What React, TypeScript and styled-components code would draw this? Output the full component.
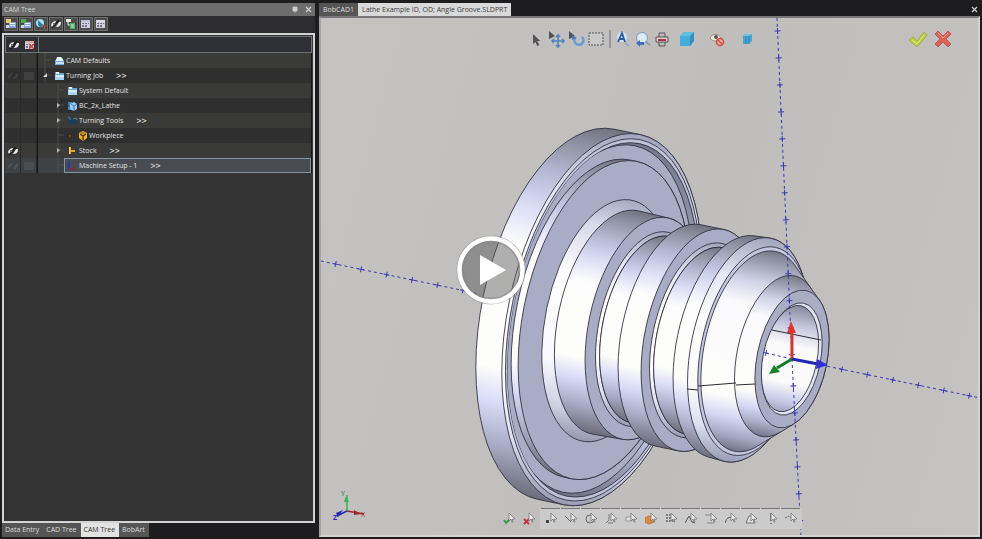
import React from "react";
import styled, { createGlobalStyle } from "styled-components";

const GlobalStyle = createGlobalStyle`
  * { box-sizing: border-box; }
  html, body, #root { height: 100%; margin: 0; }
  body { background: #1d1d20; font-family: "Open Sans", "Noto Sans", sans-serif; font-size: 7px; line-height: 10px; color: #e4e4e4; }
  button { font: inherit; color: inherit; border: 0; padding: 0; background: none; cursor: pointer; }
  ul { list-style: none; margin: 0; padding: 0; }
  svg { display: block; }
`;

/* ---------- layout ---------- */

const Shell = styled.div`
  position: relative;
  display: grid;
  grid-template-columns: minmax(200px, 9fr) minmax(0, 19fr);
  gap: 4px;
  height: 100vh;
  padding: 3px 2px 2px;
  overflow: hidden;
`;

const SidePanel = styled.aside`
  display: flex;
  flex-direction: column;
  min-height: 0;
`;

const TitleBar = styled.header`
  display: flex;
  align-items: center;
  gap: 7px;
  height: 13px;
  padding: 0 3px 0 2px;
  background: #6d6d6d;
  flex: none;
`;

const PanelTitle = styled.span`
  flex: 1;
  color: #d6d6d6;
`;

const PanelTools = styled.div`
  display: flex;
  gap: 1px;
  height: 17px;
  padding: 1px 2px;
  background: #2d2d2f;
  flex: none;
`;

const PanelTool = styled.button`
  display: grid;
  place-items: center;
  width: 14px;
  height: 14px;
  background: #4c4c4c;
  border: 1px solid #6e6e6c;
`;

const TreeFrame = styled.section`
  flex: 1;
  min-height: 0;
  padding: 1px;
  background: #333334;
  border: 2px solid #d2d3d3;
  overflow: hidden;
`;

const TreeHeader = styled.div`
  display: grid;
  grid-template-columns: 16px 16px 1fr;
  align-items: center;
  justify-items: center;
  height: 17px;
  background: #2e3035;
  border: 1px solid #6f7173;
`;

const HeaderField = styled.span`
  align-self: stretch;
  justify-self: stretch;
  border-left: 1px solid #77797b;
`;

const Row = styled.li<{ $selected?: boolean }>`
  display: grid;
  grid-template-columns: 16px 16px 1fr;
  height: 15px;
  background: #3a3a39;
  &:nth-child(even) { background: ${(p) => (p.$selected ? "#3f4244" : "#2f2f30")}; }
`;

const Cell = styled.span`
  display: grid;
  place-items: center;
  border-right: 1px solid #29292a;
`;

const NodeCell = styled.div<{ $level: number }>`
  display: flex;
  min-width: 0;
  padding-left: ${(p) => 5 + p.$level * 13}px;
  border-left: 1px solid #151515;
  border-right: 1px solid #151515;
`;

const NodeBox = styled.span<{ $selected?: boolean }>`
  display: flex;
  flex: 1;
  align-items: center;
  gap: 1px;
  min-width: 0;
  padding-left: 2px;
  border: 1px solid ${(p) => (p.$selected ? "#8296a8" : "transparent")};
  background: ${(p) => (p.$selected ? "#484c51" : "transparent")};
  white-space: nowrap;
`;

const Chevrons = styled.span`
  margin-left: 12px;
  font-size: 9px;
  font-weight: 600;
`;

const BottomTabs = styled.nav`
  display: flex;
  height: 14px;
  flex: none;
`;

const PanelTab = styled.button<{ $active?: boolean }>`
  padding: 0 4px 0 3px;
  background: ${(p) => (p.$active ? "#e2e2e2" : "#555556")};
  color: ${(p) => (p.$active ? "#333" : "#dcdcdc")};
`;

const Workspace = styled.main`
  display: flex;
  flex-direction: column;
  min-width: 0;
  min-height: 0;
`;

const DocTabs = styled.nav`
  display: flex;
  height: 13px;
  flex: none;
`;

const DocTab = styled.button<{ $active?: boolean }>`
  padding: 0 4px;
  background: ${(p) => (p.$active ? "#d9d9d9" : "#555556")};
  color: ${(p) => (p.$active ? "#3c3c3c" : "#dedede")};
  white-space: nowrap;
`;

const CloseButton = styled.button`
  margin-left: auto;
  width: 10px;
  display: grid;
  place-items: center;
`;

const Viewport = styled.section`
  position: relative;
  flex: 1;
  min-height: 0;
  display: flex;
  flex-direction: column;
  justify-content: space-between;
  background: linear-gradient(105deg, #c4c3c2, #bfbebd 55%, #c4c3c2);
  border: 2px solid #d4d4d4;
  border-top-color: #77777a;
  border-left-color: #a4a4a4;
  overflow: hidden;
`;

const Scene = styled.svg`
  position: absolute;
  inset: 0;
  width: 100%;
  height: 100%;
`;

const ViewHeader = styled.div`
  position: relative;
  display: grid;
  grid-template-columns: 1fr auto 1fr;
  align-items: center;
  padding: 11px 26px 0 16px;
`;

const ViewTools = styled.div`
  grid-column: 2;
  display: flex;
  align-items: center;
`;

const ViewTool = styled.button<{ $wide?: boolean }>`
  display: grid;
  place-items: center;
  width: ${(p) => (p.$wide ? 30 : 20)}px;
  height: 20px;
`;

const Divider = styled.span`
  width: 2px;
  height: 18px;
  margin: 0 2px;
  background: #97979a;
`;

const Decision = styled.div`
  justify-self: end;
  display: flex;
  gap: 6px;
`;

const SnapBar = styled.div`
  position: relative;
  display: flex;
  justify-content: center;
  margin-bottom: 6px;
`;

const SnapGroup = styled.div<{ $framed?: boolean }>`
  display: flex;
  padding: 0 1px;
  background: ${(p) => (p.$framed ? "#cbcbcb" : "transparent")};
`;

const SnapButton = styled.button<{ $framed?: boolean }>`
  display: grid;
  place-items: center;
  width: 20px;
  height: 21px;
  position: relative;
  &::before {
    content: "";
    position: absolute;
    inset: 0 1px auto 0;
    height: 1px;
    background: ${(p) => (p.$framed ? "#77777a" : "transparent")};
  }
`;

const PlayButton = styled.button`
  position: absolute;
  left: 50%;
  top: 50%;
  width: 70px;
  height: 70px;
  transform: translate(-50%, -50%);
`;

/* ---------- small icons ---------- */

const FolderIcon = () => (
  <svg width="11" height="10" viewBox="0 0 11 10">
    <path d="M1 1h4l1 1h4v7H1z" fill="#6da5d8" />
    <path d="M2 1h3v2H2z" fill="#e6f3ff" />
    <path d="M1 9V4h9v5z" fill="#a9d2f5" />
    <path d="M2 4h8v2H2z" fill="#d8ecfd" />
  </svg>
);
const PrinterIcon = () => (
  <svg width="11" height="10" viewBox="0 0 11 10">
    <path d="M1 4h9v5H1z" fill="#6daadd" />
    <path d="M2 4l1-3h4l2 2v2H2z" fill="#e8f4ff" />
    <path d="M2 6h8v2H2z" fill="#c7e3fa" />
  </svg>
);
const MachineIcon = () => (
  <svg width="11" height="10" viewBox="0 0 11 10">
    <path d="M1 1h4v8H1z" fill="#3d87c7" />
    <path d="M3 3l4-2 3 2v5l-3 2-4-2z" fill="#9fd0f2" />
    <path d="M4 3l3 2 3-2M7 5v5M2 2v4" stroke="#235d91" fill="none" strokeWidth=".8" />
  </svg>
);
const ToolsIcon = () => (
  <svg width="11" height="10" viewBox="0 0 11 10">
    <path d="M1 1l3 1 1 2h5v4H3L1 6z" fill="#173f5c" />
    <path d="M1 1l2 1v2M6 3l3-1 1 2" stroke="#4e86a4" fill="none" />
  </svg>
);
const WorkpieceIcon = () => (
  <svg width="21" height="10" viewBox="0 0 21 10">
    <circle cx="3" cy="5" r="1.200" fill="#b3242b" />
    <path d="M16 0l4 2v5l-4 3-4-3V2z" fill="#eeb52e" />
    <path d="M16 5v4M13 3l3 2 3-2" stroke="#4b3107" fill="none" strokeWidth="1.400" />
    <path d="M14 1l4 2M18 1l-4 2" stroke="#8f6210" fill="none" strokeWidth=".7" />
  </svg>
);
const StockIcon = () => (
  <svg width="11" height="10" viewBox="0 0 11 10">
    <path d="M2 1h2v3h4v2H4v2H2z" fill="#eba91d" />
    <path d="M2 1h1v7H2z" fill="#ffd46b" />
  </svg>
);
const SetupIcon = () => (
  <svg width="11" height="10" viewBox="0 0 11 10">
    <path d="M2 0v8" stroke="#2c2bd0" strokeWidth="1.400" />
    <path d="M3 8h5M6 6l2 2-2 1" stroke="#9a1a2c" fill="none" />
  </svg>
);
const EyeIcon = ({ dim = false }: { dim?: boolean }) => (
  <svg width="10" height="8" viewBox="0 0 10 8" opacity={dim ? 0.1 : 1}>
    <path d="M0 5c1-3 3-4 5-4L3 7H1zM10 2c0 4-2 5-5 5l3-5z" fill="#eeeeec" />
    <path d="M1 8l7-8" stroke="#191919" strokeWidth="1.500" />
    <path d="M2 3h2v2H2z" fill="#77736d" />
  </svg>
);
const GridIcon = ({ tone = "#b8c0db", mark = "" }: { tone?: string; mark?: string }) => (
  <svg width="10" height="10" viewBox="0 0 10 10">
    <rect x="0" y="1" width="9" height="8" fill="#d3cfda" />
    <path d="M0 1h9v2H0z" fill={tone} />
    <path d="M1 4h2v1H1zM4 4h2v1H4zM7 4h1v1H7zM1 6h2v2H1zM4 6h2v2H4z" fill="#6b7492" />
    {mark && <path d="M4 4l5 5M9 4L4 9" stroke={mark} strokeWidth="1.300" />}
  </svg>
);
const DimBox = () => (
  <svg width="10" height="8" viewBox="0 0 10 8"><path d="M0 0h10v8H0z" fill="#77797b" opacity=".22" /></svg>
);
const BuildIcon = ({ accent }: { accent: string }) => (
  <svg width="12" height="12" viewBox="0 0 12 12">
    <path d="M4 4h7v6H4z" fill="#83a7d6" />
    <path d="M5 5h5v1H5zM5 7h5v1H5z" fill="#e6effa" />
    <path d="M1 1h5v4H1z" fill={accent} />
    <path d="M1 7h3v3H1z" fill="#c6d8ef" />
  </svg>
);
const SimIcon = () => (
  <svg width="12" height="12" viewBox="0 0 12 12">
    <circle cx="5" cy="5" r="4" fill="#a9e3ef" />
    <path d="M3 2l5 5-2 3-3-3z" fill="#287fa8" />
    <path d="M7 7l3 1-1 3" stroke="#d23f35" fill="none" strokeWidth="1.300" />
  </svg>
);
const PostIcon = () => (
  <svg width="12" height="12" viewBox="0 0 12 12">
    <path d="M1 1h5v3H1z" fill="#e9edcf" />
    <path d="M3 4v3h3" stroke="#eee" fill="none" />
    <path d="M5 5h5v6H5z" fill="#3fb565" />
    <path d="M6 7h3M6 9h3" stroke="#c5f0cc" />
  </svg>
);
const CloseIcon = () => (
  <svg width="7" height="7" viewBox="0 0 7 7"><path d="M1 1l5 5M6 1L1 6" stroke="#cfcfcf" strokeWidth="1.200" /></svg>
);
const PinIcon = () => (
  <svg width="6" height="8" viewBox="0 0 6 8"><path d="M1 1h4v4H1zM3 5v2" fill="#d0d0d0" stroke="#d0d0d0" strokeWidth=".7" /></svg>
);

const arrow = "M0 0v10l2.300-2 2 4 2-1-2-4h3z";

const viewIcons: { name: string; art: React.ReactNode; wide?: boolean }[] = [
  { name: "Select", art: <path d={arrow} transform="translate(5 3)" fill="#555559" /> },
  {
    name: "Pan", art: <>
      <path d="M1 0v8l6-3z" fill="#515158" />
      <path d="M10 4v12M4 10h12M8 6l2-2 2 2M8 14l2 2 2-2M6 8l-2 2 2 2M14 8l2 2-2 2" stroke="#5483bd" strokeWidth="1.600" fill="none" />
    </>,
  },
  {
    name: "Rotate", art: <>
      <path d="M1 0v8l6-3z" fill="#515158" />
      <path d="M14 6a4.500 4.500 0 1 1-7 1" stroke="#6c9cd6" strokeWidth="2.600" fill="none" />
      <path d="M4 9V4l5 3z" fill="#4779bb" />
    </>,
  },
  { name: "Box select", art: <path d="M1 2h14v12H1z" stroke="#55555a" strokeDasharray="2 1" fill="#cacaca" /> },
];
const viewIconsAfter: typeof viewIcons = [
  {
    name: "Zoom to fit", art: <>
      <circle cx="8" cy="6" r="5" fill="#d3e4ef" />
      <path d="M4 11l4-9 3 9M5 8h5" stroke="#285e9c" strokeWidth="1.800" fill="none" />
      <path d="M11 12l4 3" stroke="#91a9c3" strokeWidth="1.600" />
    </>,
  },
  {
    name: "Zoom previous", art: <>
      <circle cx="8" cy="7" r="5.500" fill="#ddebf4" stroke="#799bc0" />
      <path d="M2 12l4-3v2h4v3H6v2z" fill="#3c71b9" />
      <path d="M12 11l4 3" stroke="#7d9bbb" strokeWidth="1.600" />
    </>,
  },
  {
    name: "Section view", art: <>
      <path d="M5 2h6v13H5z" fill="#bababa" stroke="#5c5558" />
      <path d="M2 6h12v5H2z" fill="#d8d0d0" stroke="#5c5558" />
      <path d="M4 8h8v2H4z" fill="#af3344" />
    </>,
  },
  {
    name: "Shaded", wide: true, art: <>
      <path d="M1 5l4-4h10v9l-4 5H1z" fill="#45add8" />
      <path d="M1 5l4-4h10l-4 4z" fill="#5fbfe2" />
      <path d="M11 5l4-4v9l-4 5z" fill="#348fbb" />
    </>,
  },
  {
    name: "Hide", wide: true, art: <>
      <path d="M1 7c3-5 8-5 11 0-3 4-8 4-11 0z" fill="#eee5df" stroke="#a18c82" />
      <circle cx="7" cy="6" r="2" fill="#5b5351" />
      <circle cx="11" cy="11" r="3.500" fill="#e9b0a5" stroke="#cf4b3e" strokeWidth="1.600" />
      <path d="M9 9l4 4" stroke="#cf4b3e" strokeWidth="1.500" />
    </>,
  },
  {
    name: "Wireframe", wide: true, art: <>
      <path d="M4 5l2-2h7v7l-3 3H4z" fill="#46a5cf" />
      <path d="M4 5l2-2h7l-3 2z" fill="#6fc0e0" />
      <path d="M10 5v8M7 5v8" stroke="#2f7fa9" strokeWidth=".8" />
    </>,
  },
];

const snapArt: { name: string; art: React.ReactNode }[] = [
  { name: "Point", art: <path d="M1 8h3v3H1z" fill="#444" /> },
  { name: "Endpoint", art: <path d="M0 4l6 6" stroke="#666" /> },
  { name: "Center", art: <circle cx="5" cy="7" r="4" stroke="#666" fill="none" /> },
  { name: "Midpoint", art: <path d="M4 2v6l-3 3M3 11h5" stroke="#777" fill="none" /> },
  { name: "Quadrant", art: <path d="M1 5h6v4H1z" stroke="#999" fill="#ddd" /> },
  { name: "Face", art: <path d="M0 6l4-2 5 2v4l-5 2-4-2z" fill="#d98a42" stroke="#b8722f" /> },
  { name: "Grid", art: <path d="M1 3h7M1 6h7M1 9h7" stroke="#666" strokeDasharray="2 1" strokeWidth="1.500" /> },
  { name: "Intersection", art: <path d="M0 11l4-7 3 6 3 1" stroke="#555" fill="none" /> },
  { name: "Parallel", art: <path d="M0 3h6M2 11h7" stroke="#888" /> },
  { name: "Tangent", art: <path d="M0 11c2-6 4-6 7-5" stroke="#555" fill="none" /> },
  { name: "Polygon", art: <path d="M1 11l3-7h4l2 7z" stroke="#777" fill="#ddd" /> },
  { name: "Vertical", art: <path d="M6 1v8M6 11v1" stroke="#333" /> },
  { name: "Edge", art: <path d="M0 6l4-2 3 3" stroke="#666" fill="none" strokeDasharray="2 1" /> },
];
const SnapCursor = () => <path d="M6 1v8l2-2 1 3h1L9 7h3z" fill="#e9e9e9" stroke="#77777b" strokeWidth=".8" />;

/* ---------- tree data ---------- */

type TreeNode = {
  label: string; level: number; icon: React.ReactNode; expander?: "open" | "closed";
  more?: boolean; eye?: "on" | "dim"; selected?: boolean;
};
const nodes: TreeNode[] = [
  { label: "CAM Defaults", level: 0, icon: <PrinterIcon /> },
  { label: "Turning Job", level: 0, icon: <FolderIcon />, expander: "open", more: true, eye: "dim" },
  { label: "System Default", level: 1, icon: <FolderIcon /> },
  { label: "BC_2x_Lathe", level: 1, icon: <MachineIcon />, expander: "closed" },
  { label: "Turning Tools", level: 1, icon: <ToolsIcon />, expander: "closed", more: true },
  { label: "Workpiece", level: 1, icon: <WorkpieceIcon /> },
  { label: "Stock", level: 1, icon: <StockIcon />, expander: "closed", more: true, eye: "on" },
  { label: "Machine Setup - 1", level: 1, icon: <SetupIcon />, more: true, eye: "dim", selected: true },
];

const Branch = ({ expander }: { expander?: string }) => (
  <svg width="8" height="15" viewBox="0 0 8 15">
    <path d="M2 0v15M2 7h6" stroke="#4c4d4d" />
    {expander === "open" && <path d="M0 9h4V5z" fill="#d5d5d5" />}
    {expander === "closed" && <path d="M1 5l3 2-3 3z" fill="#b5b5b5" />}
  </svg>
);

/* ---------- turned part ---------- */

const TILT = 11.7;
const ORIGIN = { x: 792, y: 359 };
const RATIO = 0.5;
const along = (x: number) => (x - ORIGIN.x) / Math.cos((TILT * Math.PI) / 180);

/* Silhouette of the surface swept between two coaxial circles seen at an angle. */
function sweep(xa: number, ra: number, xb: number, rb: number) {
  const ua = along(xa);
  const ub = along(xb);
  const n = Math.max(-0.99, Math.min(0.99, ((ra - rb) * RATIO) / (ub - ua)));
  const c = Math.sqrt(1 - n * n);
  const pt = (u: number, r: number, sign: number) =>
    `${(u + r * RATIO * n).toFixed(2)} ${(sign * r * c).toFixed(2)}`;
  const arc = (r: number, large: boolean) => `A${r * RATIO} ${r} 0 ${large ? 1 : 0} 1 `;
  return `M${pt(ua, ra, -1)}L${pt(ub, rb, -1)}${arc(rb, n < 0)}${pt(ub, rb, 1)}L${pt(ua, ra, 1)}${arc(ra, n > 0)}${pt(ua, ra, -1)}Z`;
}

const Ring = ({ x, r, fill = "none" }: { x: number; r: number; fill?: string }) => (
  <ellipse cx={along(x)} cy={0} rx={r * RATIO} ry={r} fill={fill} stroke="#2d2d3a" strokeWidth="0.8" />
);
const Wall = ({ a, b, fill = "url(#steel)" }: { a: [number, number]; b: [number, number]; fill?: string }) => (
  <path d={sweep(a[0], a[1], b[0], b[1])} fill={fill} stroke="#2d2d3a" strokeWidth="0.8" />
);

const FACE = "#a8acc5";

const Part = () => (
  <g transform={`translate(${ORIGIN.x} ${ORIGIN.y}) rotate(${TILT})`}>
    <Wall a={[576, 189]} b={[602, 189]} />
    <Ring x={602} r={189} fill="url(#rim)" />
    <Ring x={603} r={184} fill="#bfc3da" />
    <Ring x={603} r={180} fill="url(#groove)" />
    <g clipPath="url(#grooveClip)">
      <Ring x={599} r={177} fill={FACE} />
    </g>
    <Wall a={[597, 162]} b={[604, 162]} />
    <Ring x={604} r={162} fill={FACE} />
    <Wall a={[607, 123]} b={[615, 114]} fill="url(#fillet)" />
    <Wall a={[615, 114]} b={[645, 113]} />
    <Ring x={645} r={113} fill={FACE} />
    <Ring x={648} r={99} fill="url(#rim)" />
    <Ring x={650} r={95} fill="url(#steel)" />
    <Wall a={[650, 95]} b={[680, 95]} />
    <Wall a={[678, 113]} b={[701, 113]} />
    <Ring x={701} r={113} fill={FACE} />
    <Ring x={702} r={99} fill="url(#rim)" />
    <Ring x={704} r={95} fill="url(#steel)" />
    <Wall a={[704, 95]} b={[734, 95]} />
    <Wall a={[733, 113]} b={[748, 114]} />
    <Ring x={748} r={114} fill="url(#rim)" />
    <Ring x={754} r={106} fill="#c3c7df" />
    <Wall a={[755, 102]} b={[778, 82]} fill="url(#cone)" />
    <Wall a={[778, 82]} b={[792, 70]} fill="url(#cone)" />
    <Ring x={792} r={70} fill={FACE} />
    <Ring x={792} r={57} fill="#e0e3f2" />
    <Ring x={790} r={54} fill="url(#bore)" />
  </g>
);

type Pt = [number, number];
const DatumLine = ({ from, to, step, skip = 0 }: { from: Pt; to: Pt; step: number; skip?: number }) => {
  const dx = to[0] - from[0];
  const dy = to[1] - from[1];
  const len = Math.hypot(dx, dy);
  const ux = dx / len;
  const uy = dy / len;
  const ticks: number[] = [];
  for (let d = skip; d < len; d += step) ticks.push(d);
  return (
    <g stroke="#3a3ab4" strokeWidth="1" fill="none">
      <path d={`M${from}L${to}`} strokeDasharray="3 3" />
      {ticks.map((d) => {
        const x = from[0] + ux * d;
        const y = from[1] + uy * d;
        return <path key={d} d={`M${x - uy * 3} ${y + ux * 3}L${x + uy * 3} ${y - ux * 3}M${x - ux * 3} ${y - uy * 3}L${x + ux * 3} ${y + uy * 3}`} />;
      })}
    </g>
  );
};

const ModelScene = () => (
  <Scene viewBox="321 18 657 517" preserveAspectRatio="xMidYMid slice" role="img" aria-label="Turned part">
    <defs>
      <linearGradient id="steel" x1="0" y1="0" x2="0" y2="1">
        <stop offset="0" stopColor="#70727f" />
        <stop offset=".06" stopColor="#9093a4" />
        <stop offset=".15" stopColor="#b6bad4" />
        <stop offset=".25" stopColor="#dcdff6" />
        <stop offset=".35" stopColor="#fdfdfd" />
        <stop offset=".68" stopColor="#fdfdfa" />
        <stop offset=".77" stopColor="#d9dcf7" />
        <stop offset=".88" stopColor="#a9acc5" />
        <stop offset="1" stopColor="#6b6d7b" />
      </linearGradient>
      <linearGradient id="cone" x1="0" y1="0" x2="0" y2="1">
        <stop offset="0" stopColor="#777986" />
        <stop offset=".07" stopColor="#9da0b2" />
        <stop offset=".16" stopColor="#cfd2e6" />
        <stop offset=".28" stopColor="#fafafd" />
        <stop offset=".74" stopColor="#fdfdfa" />
        <stop offset=".84" stopColor="#d3d7f3" />
        <stop offset=".93" stopColor="#a4a7bf" />
        <stop offset="1" stopColor="#72748a" />
      </linearGradient>
      <linearGradient id="fillet" x1="0" y1="0" x2="0" y2="1">
        <stop offset="0" stopColor="#a5a9c2" />
        <stop offset=".12" stopColor="#d5d8e8" />
        <stop offset=".35" stopColor="#fff" />
        <stop offset=".7" stopColor="#f8f8fd" />
        <stop offset=".88" stopColor="#cdd0e2" />
        <stop offset="1" stopColor="#9598ae" />
      </linearGradient>
      <linearGradient id="rim" x1="0" y1="0" x2="0" y2="1">
        <stop offset="0" stopColor="#a1a5bd" />
        <stop offset=".2" stopColor="#e5e8f5" />
        <stop offset=".4" stopColor="#fcfcfc" />
        <stop offset=".7" stopColor="#fcfcfc" />
        <stop offset=".86" stopColor="#dce0f2" />
        <stop offset="1" stopColor="#989cb4" />
      </linearGradient>
      <linearGradient id="groove" x1="0" y1="0" x2="0" y2="1">
        <stop offset="0" stopColor="#73778c" />
        <stop offset=".45" stopColor="#b9bdd5" />
        <stop offset=".8" stopColor="#bfc4df" />
        <stop offset="1" stopColor="#70748a" />
      </linearGradient>
      <linearGradient id="bore" x1="0" y1="0" x2="0" y2="1">
        <stop offset="0" stopColor="#858898" />
        <stop offset=".2" stopColor="#c8cbe0" />
        <stop offset=".38" stopColor="#fafafa" />
        <stop offset=".72" stopColor="#fafafa" />
        <stop offset=".9" stopColor="#c5c9e6" />
        <stop offset="1" stopColor="#a0a4bc" />
      </linearGradient>
      <clipPath id="grooveClip">
        <ellipse cx={along(603)} cy="0" rx="90" ry="180" />
      </clipPath>
    </defs>
    <DatumLine from={[321, 261]} to={[480, 294]} step={26} skip={15} />
    <Part />
    <path d="M687 389l11 1M698 386l38-3M736 385l19-1M772 330l49 10" stroke="#2b2b32" fill="none" />
    <DatumLine from={[777, 18]} to={[792, 359]} step={27} skip={13} />
    <DatumLine from={[792, 359]} to={[801, 536]} step={27} skip={27} />
    <DatumLine from={[766, 353]} to={[792, 359]} step={40} />
    <DatumLine from={[792, 359]} to={[980, 398]} step={26} skip={51} />
    <path d="M792 359v-27" stroke="#d93435" strokeWidth="3" />
    <path d="M787 333l4-12 5 12z" fill="#e03434" />
    <path d="M792 359l-15 9" stroke="#17782a" strokeWidth="3" />
    <path d="M769 374l5-9 6 7z" fill="#148128" />
    <path d="M792 359l26 5" stroke="#2626b6" strokeWidth="3" />
    <path d="M817 359l11 6-12 4z" fill="#3030d0" />
    <g strokeWidth="1.500" fill="none">
      <path d="M347 511v-16" stroke="#35b64c" />
      <path d="M347 511l17 3" stroke="#a12828" />
      <path d="M347 511l-10 5" stroke="#2929b3" />
    </g>
    <path d="M344 502l2-6 3 6z" fill="#35b64c" />
    <path d="M354 510l7 4-7 1z" fill="#a12828" />
    <path d="M343 510l-7 3 2 4z" fill="#2929b3" />
    <g fontFamily="Open Sans, sans-serif" fontSize="7">
      <text x="341" y="496" fill="#25632f">Y</text>
      <text x="361" y="517" fill="#a12828">X</text>
      <text x="333" y="520" fill="#2929b3" fontWeight="700">Z</text>
    </g>
  </Scene>
);

const panelTools: [string, React.ReactNode][] = [
  ["New job", <BuildIcon accent="#e5cf66" />],
  ["Load job", <BuildIcon accent="#53aa4c" />],
  ["Simulate", <SimIcon />],
  ["Toggle visibility", <EyeIcon />],
  ["Post process", <PostIcon />],
  ["Setup sheet", <GridIcon />],
  ["Report", <GridIcon tone="#dadbe9" />],
];

const renderViewTools = (items: typeof viewIcons) =>
  items.map((t) => (
    <ViewTool key={t.name} $wide={t.wide} aria-label={t.name}>
      <svg width="17" height="17" viewBox="0 0 17 17">{t.art}</svg>
    </ViewTool>
  ));

export default function App() {
  return (
    <>
      <GlobalStyle />
      <Shell>
        <SidePanel>
          <TitleBar>
            <PanelTitle>CAM Tree</PanelTitle>
            <button aria-label="Pin panel"><PinIcon /></button>
            <button aria-label="Close panel"><CloseIcon /></button>
          </TitleBar>
          <PanelTools>
            {panelTools.map(([name, icon]) => <PanelTool key={name} aria-label={name}>{icon}</PanelTool>)}
          </PanelTools>
          <TreeFrame>
            <TreeHeader>
              <EyeIcon />
              <GridIcon tone="#e5a6a6" mark="#cf3c3c" />
              <HeaderField />
            </TreeHeader>
            <ul>
              {nodes.map((n) => (
                <Row key={n.label} $selected={n.selected}>
                  <Cell>{n.eye && <EyeIcon dim={n.eye === "dim"} />}</Cell>
                  <Cell>{n.eye === "dim" && <DimBox />}</Cell>
                  <NodeCell $level={n.level}>
                    <Branch expander={n.expander} />
                    <NodeBox $selected={n.selected}>
                      {n.icon}
                      <span>{n.label}</span>
                      {n.more && <Chevrons>&gt;&gt;</Chevrons>}
                    </NodeBox>
                  </NodeCell>
                </Row>
              ))}
            </ul>
          </TreeFrame>
          <BottomTabs>
            <PanelTab>Data Entry</PanelTab>
            <PanelTab>CAD Tree</PanelTab>
            <PanelTab $active>CAM Tree</PanelTab>
            <PanelTab>BobArt</PanelTab>
          </BottomTabs>
        </SidePanel>
        <Workspace>
          <DocTabs>
            <DocTab>BobCAD1</DocTab>
            <DocTab $active>Lathe Example ID, OD; Angle Groove.SLDPRT</DocTab>
            <CloseButton aria-label="Close document"><CloseIcon /></CloseButton>
          </DocTabs>
          <Viewport>
            <ModelScene />
            <ViewHeader>
              <ViewTools>
                {renderViewTools(viewIcons)}
                <Divider />
                {renderViewTools(viewIconsAfter)}
              </ViewTools>
              <Decision>
                <button aria-label="Accept">
                  <svg width="20" height="18" viewBox="0 0 20 18">
                    <path d="M1 10l4-3 4 4 7-9 3 3L9 17z" fill="#bccf47" stroke="#9fae48" />
                    <path d="M4 10l5 4 7-9" stroke="#dce77d" fill="none" />
                  </svg>
                </button>
                <button aria-label="Cancel">
                  <svg width="18" height="18" viewBox="0 0 18 18">
                    <path d="M1 4l3-3 5 5 5-5 3 3-5 5 5 5-3 3-5-5-5 5-3-3 5-5z" fill="#dc6259" stroke="#bd5a54" />
                    <path d="M4 3l5 5 5-5" stroke="#ef9d94" fill="none" />
                  </svg>
                </button>
              </Decision>
            </ViewHeader>
            <SnapBar>
              <SnapGroup>
                <SnapButton aria-label="Confirm selection">
                  <svg width="12" height="13" viewBox="0 0 12 13"><path d="M1 8l2 3 5-5" stroke="#3f9b45" strokeWidth="2" fill="none" /><SnapCursor /></svg>
                </SnapButton>
                <SnapButton aria-label="Clear selection">
                  <svg width="12" height="13" viewBox="0 0 12 13"><path d="M1 7l5 5M6 7l-5 5" stroke="#c8323f" strokeWidth="1.800" /><SnapCursor /></svg>
                </SnapButton>
              </SnapGroup>
              <SnapGroup $framed>
                {snapArt.map((s) => (
                  <SnapButton key={s.name} $framed aria-label={s.name}>
                    <svg width="12" height="13" viewBox="0 0 12 13">{s.art}<SnapCursor /></svg>
                  </SnapButton>
                ))}
              </SnapGroup>
            </SnapBar>
          </Viewport>
        </Workspace>
        <PlayButton aria-label="Play video">
          <svg width="70" height="70" viewBox="0 0 70 70">
            <circle cx="35" cy="35" r="31" fill="#55555577" stroke="#858585" strokeWidth="7" strokeOpacity=".5" />
            <circle cx="35" cy="35" r="31.500" fill="none" stroke="#fff" strokeWidth="4.500" />
            <path d="M24 20v30l26-15z" fill="#fff" />
          </svg>
        </PlayButton>
      </Shell>
    </>
  );
}
